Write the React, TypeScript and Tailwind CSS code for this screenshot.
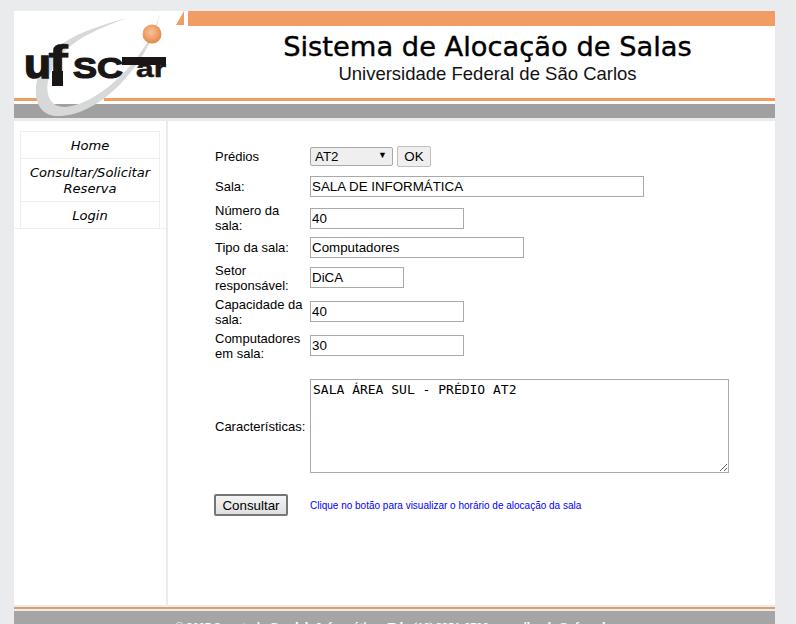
import type { ReactNode } from "react";

function Row({ label, children, h }: { label: ReactNode; children: ReactNode; h: string }) {
  return (
    <div className={`flex items-center ${h}`}>
      <div className="w-[95px] leading-[15px]">{label}</div>
      {children}
    </div>
  );
}
const inputCls = "h-[21px] border border-[#a9a9a9] bg-white px-px text-[13.33px] text-black font-['Liberation_Sans',sans-serif] outline-none";
function Logo() {
  return (
    <svg width="176" height="107" viewBox="0 0 176 107" className="absolute left-0 top-0">
      <defs>
        <radialGradient id="ball" cx="0.45" cy="0.4" r="0.65">
          <stop offset="0" stopColor="#f6c39c" />
          <stop offset="0.55" stopColor="#f0a068" />
          <stop offset="1" stopColor="#d98444" />
        </radialGradient>
      </defs>
      <polygon points="162,14 170,0 170,14" fill="#f19c62" />
      <rect x="23" y="87" width="67" height="5" fill="#ffffff" />
      <path d="M146 2 C140 40 92 108 40 105 C14 101 18 62 38 42 C56 22 90 14 112 7 C92 16 62 24 44 48 C28 70 30 96 50 96 C88 94 136 42 146 2 Z" fill="#d7d8d8" />
      <circle cx="138" cy="23" r="9.500" fill="url(#ball)" />
      <g fontFamily="'Liberation Sans',sans-serif" fontWeight="700" fill="#1a1616" stroke="#1a1616">
        <text x="10" y="67" fontSize="40" strokeWidth="1.500" textLength="27" lengthAdjust="spacingAndGlyphs">u</text>
        <text x="34" y="67" fontSize="46" strokeWidth="0.500" textLength="20" lengthAdjust="spacingAndGlyphs">f</text>
        <text x="59" y="67" fontSize="30" strokeWidth="1.200" textLength="50" lengthAdjust="spacingAndGlyphs">SC</text>
        <text x="122" y="66" fontSize="23" strokeWidth="0.500" textLength="30" lengthAdjust="spacingAndGlyphs">ar</text>
      </g>
      <rect x="38" y="60" width="11" height="15" fill="#1a1616" />
      <rect x="108" y="46" width="44" height="8" fill="#1a1616" />
    </svg>
  );
}
export default function App() {
  return (
    <div className="h-[624px] overflow-hidden bg-[#e9ebed] pt-[11px] pl-[14px] pr-[21px] font-['Liberation_Sans',sans-serif] text-[13px] text-black">
      <header className="relative h-[107px] bg-white">
        <Logo />
        <div className="ml-[174px] h-[15px] bg-[#f19c62]" />
        <div className="ml-[172px] flex h-[72px] flex-col items-center pl-[14px]">
          <div className="mt-[5px] font-['DejaVu_Sans',sans-serif] text-[27.300px] leading-[32px] text-black [-webkit-text-stroke:0.4px_#000]">Sistema de Alocação de Salas</div>
          <div className="text-[18.500px] leading-[22px] text-[#111]">Universidade Federal de São Carlos</div>
        </div>
        <div className="h-[3px] bg-[#f19c62]" />
        <div className="mt-[3px] h-[14px] bg-[#a0a0a0]" />
      </header>
      <main className="mt-[3px] flex h-[484px] bg-white">
        <nav className="w-[152px] shrink-0 pt-[10px]">
          <div className="border-b border-[#eeeeee] font-['DejaVu_Sans',sans-serif] text-[13.100px] italic text-center leading-[16px]">
            <div className="ml-[6px] w-[140px] border-x border-t border-[#eeeeee]">
              <div className="h-[26px] pt-[6px]">Home</div>
              <div className="h-[43px] border-t border-[#eeeeee] pt-[6px]">Consultar/Solicitar<br />Reserva</div>
              <div className="h-[27px] border-t border-[#eeeeee] pt-[6px]">Login</div>
            </div>
          </div>
        </nav>
        <div className="w-[2px] bg-[#e9ebed]" />
        <section className="flex-1 pl-[47px] pt-[24px]">
          <div className="flex flex-col">
            <Row label="Prédios" h="h-[23px]">
              <div className="flex items-center gap-[4px]">
                <div className="relative flex h-[19px] w-[83px] items-center rounded-[2px] border border-[#a9a9a9] bg-[#efefef] pl-[4px] text-[13.33px]">
                  AT2
                  <span className="absolute right-[5px] top-[1px] text-[9px]">▼</span>
                </div>
                <button className="h-[21px] w-[34px] rounded-[2px] border border-[#c0c0c0] bg-[#efefef] text-[13.33px]">OK</button>
              </div>
            </Row>
            <Row label="Sala:" h="mt-[8px] h-[21px]">
              <input readOnly value="SALA DE INFORMÁTICA" className={`${inputCls} w-[334px]`} />
            </Row>
            <Row label={<>Número da<br />sala:</>} h="mt-[6px] h-[30px]">
              <input readOnly value="40" className={`${inputCls} w-[154px]`} />
            </Row>
            <Row label="Tipo da sala:" h="mt-[4px] h-[21px]">
              <input readOnly value="Computadores" className={`${inputCls} w-[214px]`} />
            </Row>
            <Row label={<div className="pt-[2px]">Setor<br />responsável:</div>} h="mt-[4px] h-[30px]">
              <input readOnly value="DiCA" className={`${inputCls} w-[94px]`} />
            </Row>
            <Row label={<div className="pt-[2px]">Capacidade da<br />sala:</div>} h="mt-[4px] h-[30px]">
              <input readOnly value="40" className={`${inputCls} w-[154px]`} />
            </Row>
            <Row label={<div className="pt-[2px]">Computadores<br />em sala:</div>} h="mt-[4px] h-[30px]">
              <input readOnly value="30" className={`${inputCls} w-[154px]`} />
            </Row>
            <Row label="Características:" h="mt-[19px] h-[94px]">
              <textarea readOnly value="SALA ÁREA SUL - PRÉDIO AT2" className="h-[94px] w-[419px] border border-[#a9a9a9] bg-white px-[2px] py-[2px] font-['DejaVu_Sans_Mono',monospace] text-[13px] leading-[15px] text-black outline-none" />
            </Row>
            <div className="mt-[21px] flex items-center">
              <button className="-ml-px mr-[22px] h-[22px] w-[74px] rounded-[2px] border-2 border-[#767676] bg-gradient-to-b from-[#f4f4f4] to-[#e0e0e0] text-[13.33px]">Consultar</button>
              <span className="text-[10px] text-[#0000ff]">Clique no botão para visualizar o horário de alocação da sala</span>
            </div>
          </div>
        </section>
      </main>
      <div className="mt-[2px] h-[2px] bg-[#ea9a66]" />
      <footer className="mt-[2px] h-[30px] bg-[#a5a5a5] pt-[7px] text-center font-['Liberation_Serif',serif] text-[12px] font-bold text-white">
        © 2007 Secretaria Geral de Informática - Tel.: (16) 3351-8796 - e-mail: sala@ufscar.br
      </footer>
    </div>
  );
}
